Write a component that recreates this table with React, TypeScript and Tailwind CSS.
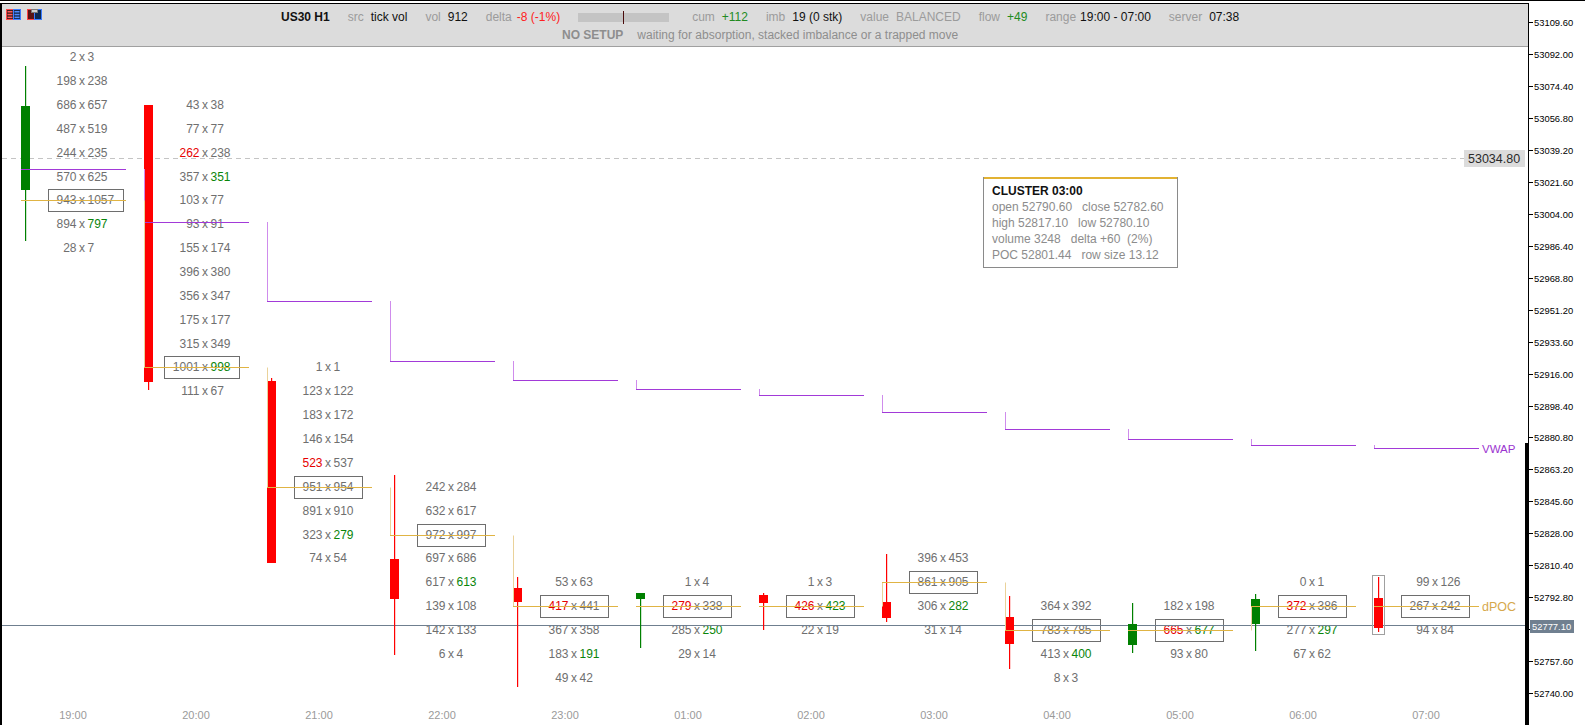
import React from "react";

const FONT = "'Liberation Sans', Arial, Helvetica, sans-serif";
const left = (i: number) => 21 + i * 123;
const rowY = (k: number) => 57.3 + k * 23.86;
const priceY = (p: number) => 150 + (53039.2 - p) * 1.815;

const TXT = "#6f6f6f";
const TXT_RED = "#e60000";
const TXT_GREEN = "#0a850a";
const UP = "#008000";
const DOWN = "#ff0000";

// [bid, ask, colour flags: first char for bid, second for ask]
type Row = [number, number, string?];
type Candle = { up: boolean; wt: number; bt: number; bb: number; wb: number };
interface Column {
  hour: string;
  start: number;
  poc: number;
  vwap: number;
  rows: Row[];
  candle: Candle;
}

const columns: Column[] = [
  {
    hour: "19:00", start: 0, poc: 6, vwap: 169,
    rows: [[2, 3], [198, 238], [686, 657], [487, 519], [244, 235], [570, 625], [943, 1057], [894, 797, "-g"], [28, 7]],
    candle: { up: true, wt: 66, bt: 106, bb: 190, wb: 241 },
  },
  {
    hour: "20:00", start: 2, poc: 13, vwap: 222,
    rows: [[43, 38], [77, 77], [262, 238, "r-"], [357, 351, "-g"], [103, 77], [93, 91], [155, 174], [396, 380], [356, 347], [175, 177], [315, 349], [1001, 998, "-g"], [111, 67]],
    candle: { up: false, wt: 105, bt: 105, bb: 382, wb: 390 },
  },
  {
    hour: "21:00", start: 13, poc: 18, vwap: 301,
    rows: [[1, 1], [123, 122], [183, 172], [146, 154], [523, 537, "r-"], [951, 954], [891, 910], [323, 279, "-g"], [74, 54]],
    candle: { up: false, wt: 378, bt: 381, bb: 563, wb: 563 },
  },
  {
    hour: "22:00", start: 18, poc: 20, vwap: 361,
    rows: [[242, 284], [632, 617], [972, 997], [697, 686], [617, 613, "-g"], [139, 108], [142, 133], [6, 4]],
    candle: { up: false, wt: 475, bt: 559, bb: 599, wb: 655 },
  },
  {
    hour: "23:00", start: 22, poc: 23, vwap: 380,
    rows: [[53, 63], [417, 441, "r-"], [367, 358], [183, 191, "-g"], [49, 42]],
    candle: { up: false, wt: 577, bt: 588, bb: 602, wb: 687 },
  },
  {
    hour: "01:00", start: 22, poc: 23, vwap: 389,
    rows: [[1, 4], [279, 338, "r-"], [285, 250, "-g"], [29, 14]],
    candle: { up: true, wt: 593, bt: 593, bb: 599, wb: 648 },
  },
  {
    hour: "02:00", start: 22, poc: 23, vwap: 395,
    rows: [[1, 3], [426, 423, "rg"], [22, 19]],
    candle: { up: false, wt: 593, bt: 595, bb: 603, wb: 630 },
  },
  {
    hour: "03:00", start: 21, poc: 22, vwap: 412,
    rows: [[396, 453], [861, 905], [306, 282, "-g"], [31, 14]],
    candle: { up: false, wt: 554, bt: 602, bb: 618, wb: 622 },
  },
  {
    hour: "04:00", start: 23, poc: 24, vwap: 429,
    rows: [[364, 392], [783, 785], [413, 400, "-g"], [8, 3]],
    candle: { up: false, wt: 596, bt: 617, bb: 644, wb: 669 },
  },
  {
    hour: "05:00", start: 23, poc: 24, vwap: 439,
    rows: [[182, 198], [665, 677, "rg"], [93, 80]],
    candle: { up: true, wt: 603, bt: 624, bb: 645, wb: 653 },
  },
  {
    hour: "06:00", start: 22, poc: 23, vwap: 445,
    rows: [[0, 1], [372, 386, "r-"], [277, 297, "-g"], [67, 62]],
    candle: { up: true, wt: 594, bt: 599, bb: 624, wb: 651 },
  },
  {
    hour: "07:00", start: 22, poc: 23, vwap: 448,
    rows: [[99, 126], [267, 242], [94, 84]],
    candle: { up: false, wt: 577, bt: 598, bb: 628, wb: 632 },
  },
];

const flagColor = (f?: string) => (f === "r" ? TXT_RED : f === "g" ? TXT_GREEN : TXT);
const digitW = (n: number) => String(n).length * 6.67;

function ClusterColumn({ col, i }: { col: Column; i: number }) {
  const cx = left(i) + 61;
  return (
    <g>
      {col.rows.map(([a, b, f], r) => {
        const k = col.start + r;
        const y = rowY(k);
        const isPoc = k === col.poc;
        const x1 = cx - 6 - digitW(a) - 8;
        const x2 = cx + 6 + digitW(b) + 8;
        return (
          <g key={r}>
            <text x={cx - 5.5} y={y} textAnchor="end" dominantBaseline="central" fill={flagColor(f?.[0])}>{a}</text>
            <text x={cx} y={y} textAnchor="middle" dominantBaseline="central" fill={TXT}>x</text>
            <text x={cx + 5.5} y={y} textAnchor="start" dominantBaseline="central" fill={flagColor(f?.[1])}>{b}</text>
            {isPoc && (
              <rect x={Math.round(x1) + 0.5} y={Math.round(y - 11) + 0.5} width={Math.round(x2 - x1)} height={22} fill="none" stroke="#6e6e6e" />
            )}
          </g>
        );
      })}
    </g>
  );
}

function CandleShape({ c, i }: { c: Candle; i: number }) {
  const x = left(i);
  const color = c.up ? UP : DOWN;
  return (
    <g>
      <rect x={x + 4} y={c.wt} width={1.2} height={c.wb - c.wt} fill={color} />
      <rect x={x} y={c.bt} width={9} height={Math.max(c.bb - c.bt, 1)} fill={color} />
    </g>
  );
}

function Chart() {
  return (
    <svg width={1526} height={678} viewBox="2 47 1526 678" className="block" fontFamily={FONT} fontSize={12}>
      {/* last price dashed line */}
      <line x1={2} x2={1464} y1={158.5} y2={158.5} stroke="#c4c4c4" strokeDasharray="5 4" />
      <rect x={1464} y={150} width={61} height={17} fill="#dcdcdc" />
      <text x={1468} y={159} dominantBaseline="central" fill="#2a2a2a" fontSize={12.5}>53034.80</text>

      {columns.map((c, i) => (
        <ClusterColumn key={c.hour} col={c} i={i} />
      ))}

      {/* current price */}
      <line x1={2} x2={1525} y1={625.5} y2={625.5} stroke="#6f7f8f" />

      {columns.map((c, i) => (
        <CandleShape key={c.hour} c={c.candle} i={i} />
      ))}
      <rect x={1372.5} y={575.5} width={12} height={59} fill="none" stroke="#a0a0a0" />

      {/* VWAP steps */}
      {columns.map((c, i) => {
        const x = left(i) + 0.5;
        const prev = i > 0 ? columns[i - 1].vwap : c.vwap;
        return (
          <g key={c.hour}>
            {prev !== c.vwap && <line x1={x} x2={x} y1={prev} y2={c.vwap} stroke="#cf8cec" />}
            <line x1={left(i)} x2={left(i) + 105} y1={c.vwap + 0.5} y2={c.vwap + 0.5} stroke="#a23ad8" />
          </g>
        );
      })}
      <text x={1482} y={449} dominantBaseline="central" fill="#9b33d0" fontSize={11.5}>VWAP</text>

      {/* POC steps */}
      {columns.map((c, i) => {
        const x = left(i) + 0.5;
        const y = Math.round(rowY(c.poc)) + 0.5;
        const prev = i > 0 ? Math.round(rowY(columns[i - 1].poc)) + 0.5 : y;
        return (
          <g key={c.hour}>
            {prev !== y && <line x1={x} x2={x} y1={prev} y2={y} stroke="#ead29a" />}
            <line x1={left(i)} x2={left(i) + 105} y1={y} y2={y} stroke="#e0b444" />
          </g>
        );
      })}
      <text x={1482} y={607} dominantBaseline="central" fill="#d6a84c" fontSize={12.5}>dPOC</text>

      {/* hour labels */}
      {columns.map((c, i) => (
        <text key={c.hour} x={left(i) + 52} y={715} textAnchor="middle" dominantBaseline="central" fill="#9a9a9a" fontSize={11}>
          {c.hour}
        </text>
      ))}

      {/* heavy part of the price scale border */}
      <rect x={1525} y={443} width={3} height={282} fill="#000" />
    </svg>
  );
}

function PriceScale() {
  const ticks = Array.from({ length: 22 }, (_, j) => 53109.6 - 17.6 * j);
  return (
    <svg width={56} height={722} viewBox="1529 3 56 722" className="block" fontFamily={FONT}>
      {ticks.map((p) => {
        const y = Math.round(priceY(p)) + 0.5;
        return (
          <g key={p}>
            <line x1={1529} x2={1533} y1={y} y2={y} stroke="#000" />
            <text x={1534} y={y} dominantBaseline="central" fontSize={9.4} fill="#000">
              {p.toFixed(2)}
            </text>
          </g>
        );
      })}
      <rect x={1530} y={620} width={44} height={13} fill="#708090" />
      <text x={1532} y={626.5} dominantBaseline="central" fontSize={9.4} fill="#fff">52777.10</text>
    </svg>
  );
}

function ListIcon() {
  return (
    <svg width="15" height="11" viewBox="0 0 15 11">
      <rect x="0.5" y="0.5" width="7" height="10" fill="#3b1d1d" stroke="#ff4a4a" />
      <rect x="7.5" y="0.5" width="7" height="10" fill="#14264a" stroke="#3d7dff" />
      <rect x="1.5" y="2" width="5" height="1.5" fill="#ff5a5a" />
      <rect x="1.5" y="4.8" width="5" height="1.5" fill="#ff5a5a" />
      <rect x="1.5" y="7.6" width="5" height="1.5" fill="#ff5a5a" />
      <rect x="8.5" y="2" width="5" height="1.5" fill="#4f8bff" />
      <rect x="8.5" y="4.8" width="5" height="1.5" fill="#4f8bff" />
      <rect x="8.5" y="7.6" width="5" height="1.5" fill="#4f8bff" />
    </svg>
  );
}

function SaveIcon() {
  return (
    <svg width="15" height="11" viewBox="0 0 15 11">
      <rect x="0.5" y="0.5" width="7" height="10" fill="#5a1414" stroke="#ff4444" />
      <rect x="7.5" y="0.5" width="7" height="10" fill="#0c2850" stroke="#3a7cff" />
      <rect x="4.5" y="0.5" width="6" height="3" fill="#d0d0d0" stroke="#7a7a7a" />
    </svg>
  );
}

function Item({ label, value, color = "text-[#111]", gap = "gap-[7px]" }: { label: string; value: string; color?: string; gap?: string }) {
  return (
    <span className={`flex ${gap}`}>
      <span className="text-[#9b9b9b]">{label}</span>
      <span className={color}>{value}</span>
    </span>
  );
}

function Header() {
  return (
    <div className="h-[43px] bg-[#dcdcdc] border-b border-[#a0a0a0] flex flex-col text-[12px] leading-[14px]">
      <div className="mt-[6px] h-[14px] flex items-start pl-[4px]">
        <div className="flex gap-[6px] -mt-[1px]">
          <ListIcon />
          <SaveIcon />
        </div>
        <div className="ml-[239px] flex gap-[18px] whitespace-nowrap">
          <span className="font-bold text-[#111]">US30 H1</span>
          <Item label="src" value="tick vol" />
          <Item label="vol" value="912" />
          <Item label="delta" value="-8 (-1%)" color="text-[#ff2020]" gap="gap-[5px]" />
          <span className="relative w-[91px] h-[9px] mt-[3px] bg-[#c4c4c4]">
            <span className="absolute left-[45px] -top-[2px] w-px h-[13px] bg-[#4a0c0c]" />
          </span>
          <span className="flex gap-[18px] ml-[5px]">
            <Item label="cum" value="+112" color="text-[#228b22]" />
            <Item label="imb" value="19 (0 stk)" />
            <Item label="value" value="BALANCED" color="text-[#9b9b9b]" />
            <Item label="flow" value="+49" color="text-[#228b22]" />
            <Item label="range" value="19:00 - 07:00" gap="gap-[4px]" />
            <Item label="server" value="07:38" />
          </span>
        </div>
      </div>
      <div className="mt-[4px] h-[14px] flex gap-[14px] pl-[560px] whitespace-nowrap text-[#8e8e8e]">
        <span className="font-bold">NO SETUP</span>
        <span>waiting for absorption, stacked imbalance or a trapped move</span>
      </div>
    </div>
  );
}

function ClusterTooltip() {
  return (
    <div className="absolute left-[981px] top-[130px] w-[195px] h-[91px] bg-white border border-[#8a8a8a] border-t-0 text-[12px] leading-[16px]">
      <div className="h-[2px] bg-[#e2b232]" />
      <div className="pl-[8px] pt-[4px] whitespace-pre">
        <div className="font-bold text-[#111]">CLUSTER 03:00</div>
        <div className="text-[#8c8c8c]">open 52790.60   close 52782.60</div>
        <div className="text-[#8c8c8c]">high 52817.10   low 52780.10</div>
        <div className="text-[#8c8c8c]">volume 3248   delta +60  (2%)</div>
        <div className="text-[#8c8c8c]">POC 52801.44   row size 13.12</div>
      </div>
    </div>
  );
}

export default function App() {
  return (
    <div className="w-[1585px] h-[725px] bg-white overflow-hidden flex flex-col font-['Liberation_Sans',Arial,sans-serif]">
      <div className="h-px bg-black" />
      <div className="h-[2px]" />
      <div className="flex flex-1 min-h-0">
        <div className="w-[1529px] flex flex-col border-l-2 border-t border-r border-black border-b-0">
          <Header />
          <div className="relative flex-1 min-h-0 overflow-hidden">
            <Chart />
            <ClusterTooltip />
          </div>
        </div>
        <div className="flex-1">
          <PriceScale />
        </div>
      </div>
    </div>
  );
}
